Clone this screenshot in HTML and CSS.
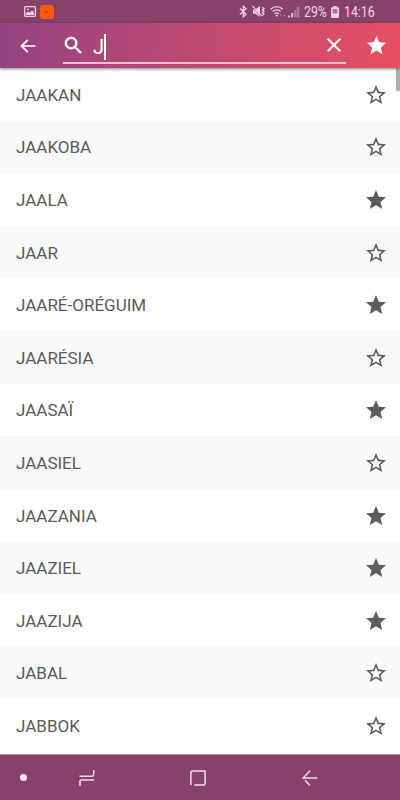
FILE: index.html
```html
<!DOCTYPE html>
<html lang="fr">
<head>
<meta charset="UTF-8">
<meta name="viewport" content="width=device-width, initial-scale=1">
<title>Recherche</title>
<link rel="stylesheet" href="styles.css">
</head>
<body>
<!-- icônes partagées -->
<svg class="sprite" aria-hidden="true">
  <symbol id="star" viewBox="0 0 24 24"><path d="M12 17.27L18.18 21l-1.64-7.03L22 9.24l-7.19-.61L12 2 9.19 8.63 2 9.24l5.46 4.73L5.82 21z"/></symbol>
  <symbol id="star-border" viewBox="0 0 24 24"><path d="M22 9.24l-7.19-.62L12 2 9.19 8.63 2 9.24l5.46 4.73L5.82 21 12 17.27 18.18 21l-1.63-7.03L22 9.24zM12 15.4l-3.76 2.27 1-4.28-3.32-2.88 4.38-.38L12 6.1l1.71 4.04 4.38.38-3.32 2.88 1 4.28L12 15.4z"/></symbol>
</svg>

<div class="status-bar">
  <div class="notifications">
    <svg width="12" height="11" viewBox="0 0 12 11"><rect x=".7" y=".7" width="10.6" height="9.6" rx=".8" fill="none" stroke="#f3cfe0" stroke-width="1.3"/><path d="M2 9V7.3l2.2-2 1.6 1.5L8 4.2l2 2.2V9z" fill="#f3cfe0"/><circle cx="4" cy="3.3" r=".9" fill="#f3cfe0"/></svg>
    <svg width="14" height="14" viewBox="0 0 14 14"><rect width="14" height="14" rx="3" fill="#ff5a0a"/><path d="M4 4.5h1M9 4h1M5.3 8V6.2h1.2V8M7.8 8V6.2" fill="none" stroke="#b8450f" stroke-width=".9"/></svg>
  </div>
  <div class="indicators">
    <svg class="bluetooth" width="9" height="13" viewBox="0 0 9 13"><path d="M1 3.6l6 5.6-2.7 2.6V1.2L7 3.8 1 9.4" fill="none" stroke="#f3cfe0" stroke-width="1.3"/></svg>
    <svg class="mute" width="14" height="13" viewBox="0 0 14 13"><path d="M1 4.2h2.5L8 1v11L3.5 8.8H1z" fill="#f3cfe0"/><path d="M0 2.2l9.2 9.6" stroke="#89426a" stroke-width=".7"/><path d="M.4 1l9.4 9.9" stroke="#f3cfe0" stroke-width="1.1"/><path d="M10.3 2.2l1.7 1.3-1.6 1.4L12 6.3l-1.6 1.4L12 9.1l-1.6 1.4" fill="none" stroke="#f3cfe0" stroke-width="1.3"/></svg>
    <svg class="wifi" width="16" height="13" viewBox="0 0 16 13"><g fill="none" stroke="#f3cfe0" stroke-width="1.3"><path d="M.6 4.2Q6.7-1 12.8 4.2"/><path d="M2.6 6.5q4.1-3.4 8.2 0"/><path d="M4.5 8.7q2.2-1.8 4.4 0"/></g><circle cx="6.7" cy="10.6" r="1.1" fill="#f3cfe0"/><path d="M9.5 9h2.4l-1.2 2zM13 9.8h2.4l-1.2 2z" fill="#ad7997"/></svg>
    <svg class="signal" width="12" height="12" viewBox="0 0 12 12"><path d="M0 9.5h2v2H0zM3.2 7h2v4.5h-2z" fill="#e6bfd2"/><path d="M6.2 4h2.2v7.5H6.2zM8.8 1h2.6v10.5H8.8z" fill="#ad7997"/></svg>
    <span class="percent">29%</span>
    <svg class="battery" width="8" height="12" viewBox="0 0 8 12"><path d="M2.3 0h3.4v1.3H7q1 0 1 1V11q0 1-1 1H1q-1 0-1-1V2.3q0-1 1-1h1.3z" fill="#f3cfe0"/><path d="M1.6 3h4.8v4.5H1.6z" fill="#ac7695"/></svg>
    <span class="clock">14:16</span>
  </div>
</div>

<header class="app-bar">
  <svg class="back" width="20" height="20" viewBox="0 0 24 24"><path d="M21 11H6.8l5.7-5.7L11 3.8 2.8 12l8.2 8.2 1.5-1.5L6.8 13H21z" fill="#fff"/></svg>
  <div class="search-field">
    <svg class="search" width="23" height="23" viewBox="0 0 24 24"><path d="M15.5 14h-.79l-.28-.27C15.41 12.59 16 11.11 16 9.5 16 5.91 13.09 3 9.5 3S3 5.91 3 9.5 5.91 16 9.5 16c1.61 0 3.09-.59 4.23-1.57l.27.28v.79l5 4.99L20.49 19l-4.99-5zm-6 0C7.01 14 5 11.99 5 9.5S7.01 5 9.5 5 14 7.01 14 9.5 11.99 14 9.5 14z" fill="#fff" stroke="#fff" stroke-width=".4"/></svg>
    <span class="query">J</span><span class="caret"></span>
    <svg class="clear" width="24" height="24" viewBox="0 0 24 24"><path d="M19 6.41L17.59 5 12 10.59 6.41 5 5 6.41 10.59 12 5 17.59 6.41 19 12 13.41 17.59 19 19 17.59 13.41 12z" fill="#fff"/></svg>
  </div>
  <svg class="favorites" width="23" height="23"><use href="#star"/></svg>
</header>

<main class="list">
  <div class="row"><span>JAAKAN</span><svg class="star"><use href="#star-border"/></svg></div>
  <div class="row"><span>JAAKOBA</span><svg class="star"><use href="#star-border"/></svg></div>
  <div class="row"><span>JAALA</span><svg class="star"><use href="#star"/></svg></div>
  <div class="row"><span>JAAR</span><svg class="star"><use href="#star-border"/></svg></div>
  <div class="row"><span>JAARÉ-ORÉGUIM</span><svg class="star"><use href="#star"/></svg></div>
  <div class="row"><span>JAARÉSIA</span><svg class="star"><use href="#star-border"/></svg></div>
  <div class="row"><span>JAASAÏ</span><svg class="star"><use href="#star"/></svg></div>
  <div class="row"><span>JAASIEL</span><svg class="star"><use href="#star-border"/></svg></div>
  <div class="row"><span>JAAZANIA</span><svg class="star"><use href="#star"/></svg></div>
  <div class="row"><span>JAAZIEL</span><svg class="star"><use href="#star"/></svg></div>
  <div class="row"><span>JAAZIJA</span><svg class="star"><use href="#star"/></svg></div>
  <div class="row"><span>JABAL</span><svg class="star"><use href="#star-border"/></svg></div>
  <div class="row"><span>JABBOK</span><svg class="star"><use href="#star-border"/></svg></div>
  <div class="scrollbar"></div>
</main>

<nav class="nav-bar">
  <span class="dot"></span>
  <svg class="recents" width="16" height="18" viewBox="0 0 16 18"><path d="M.5 7.2H13q1.7 0 1.7-1.7V1M15.2 10.9H2.7q-1.7 0-1.7 1.7V17" fill="none" stroke="#f8d9e8" stroke-width="1.5"/></svg>
  <svg class="home" width="16" height="16" viewBox="0 0 16 16"><path d="M.9 15V2.4Q.9.9 2.4.9h12.7v12.7q0 1.5-1.5 1.5H4.2" fill="none" stroke="#f8d9e8" stroke-width="1.5"/></svg>
  <svg class="return" width="16" height="16" viewBox="0 0 16 16"><path d="M15.4 8H1.2L8 .8M3 10.2l4.8 5" fill="none" stroke="#f8d9e8" stroke-width="1.5"/></svg>
</nav>
</body>
</html>
```
FILE: styles.css
```css
* {
  box-sizing: border-box;
}
body {
  margin: 0;
  width: 400px;
  height: 800px;
  display: flex;
  flex-direction: column;
  overflow: hidden;
  background: #fff;
  font-family: Roboto, Arial, sans-serif;
}
svg {
  display: block;
  flex-shrink: 0;
}
.sprite {
  position: absolute;
  width: 0;
  height: 0;
}

/* barre d'état */
.status-bar {
  height: 23px;
  flex-shrink: 0;
  display: flex;
  align-items: center;
  justify-content: space-between;
  padding: 0 25px 0 24px;
  background: #87426a;
  color: #f6d6e5;
}
.notifications {
  display: flex;
  align-items: center;
  gap: 4px;
}
.indicators {
  display: flex;
  align-items: center;
  font-size: 15px;
  line-height: 23px;
}
.mute {
  margin-left: 4px;
}
.wifi {
  margin-left: 4px;
}
.signal {
  margin-left: 2px;
}
.percent,
.clock {
  transform: scaleX(0.82);
  transform-origin: left center;
  padding-top: 1px;
}
.percent {
  width: 23px;
  margin-left: 4px;
}
.battery {
  margin-left: 4px;
}
.clock {
  width: 31px;
  margin-left: 5px;
}

/* barre de recherche */
.app-bar {
  height: 45px;
  flex-shrink: 0;
  display: flex;
  align-items: center;
  padding: 0 12px 0 18px;
  background: linear-gradient(96deg, #944382 0%, #be4a71 50%, #e84f62 100%);
  box-shadow: 0 1px 3px rgba(0, 0, 0, 0.5);
  z-index: 1;
}
.search-field {
  width: 283px;
  height: 32px;
  margin: 5px 0 0 25px;
  display: flex;
  align-items: center;
  border-bottom: 2px solid #f9bfd0;
}
.search {
  margin: -3px 0 0 -1px;
}
.query {
  margin-left: 8px;
  width: 11px;
  font-size: 20px;
  line-height: 22px;
  color: #fff;
}
.caret {
  width: 2px;
  height: 26px;
  margin-top: -1px;
  background: #fff;
}
.clear {
  margin: -4px 0 0 auto;
}
.favorites {
  margin-left: auto;
  fill: #fff;
}

/* liste des noms */
.list {
  position: relative;
  flex: 1;
  min-height: 0;
}
.row {
  height: 52.6px;
  display: flex;
  align-items: center;
  justify-content: space-between;
  padding: 1px 12px 0 16px;
  font-size: 17px;
  color: #5a5a5a;
}
.row:nth-child(even) {
  background: #f8f9fb;
}
.star {
  width: 24px;
  height: 24px;
  fill: #5c5c5c;
}
.scrollbar {
  position: absolute;
  top: 0;
  right: 0;
  width: 4px;
  height: 23px;
  background: #b0b0b0;
}

/* barre de navigation */
.nav-bar {
  height: 46px;
  flex-shrink: 0;
  display: flex;
  align-items: center;
  padding-left: 20px;
  background: #87426a;
  border-top: 1px solid #b98ba5;
}
.dot {
  width: 7px;
  height: 7px;
  border-radius: 50%;
  background: #fdeef6;
}
.recents {
  margin-left: 52px;
}
.home {
  margin-left: 95px;
}
.return {
  margin-left: 96px;
}
```
